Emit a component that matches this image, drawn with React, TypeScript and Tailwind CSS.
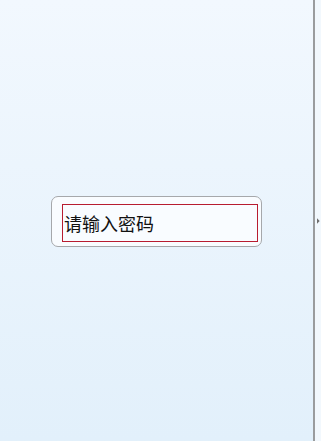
import React from "react";

export default function App() {
  return (
    <div
      className="flex w-[321px] h-[441px] overflow-hidden bg-gradient-to-b from-[#f2f8fe] to-[#e2f0fb]"
      style={{ fontFamily: '"Noto Sans CJK SC", "Liberation Sans", sans-serif' }}
    >
      <div className="flex flex-1 items-center justify-center">
        <div className="mt-[2px] w-[211px] h-[51px] rounded-[7px] border border-[#a6a8ab] bg-[#f9fcff] pl-[10px] pr-[3px] pt-[7px] pb-[4px] box-border">
          <div className="h-[38px] w-full border border-[#b81c30] flex items-center pl-[1px] box-border">
            <span className="text-[18px] leading-none text-[#111]">请输入密码</span>
          </div>
        </div>
      </div>
      <div className="w-[2px] h-full bg-[#9a9c9e]" />
      <div className="w-[6px] h-full bg-[#f2f8fd] flex items-center">
        <svg width="6" height="8" viewBox="0 0 6 8" className="ml-[2px]">
          <polygon points="0,0 4,4 0,8" fill="#6e6e6e" />
        </svg>
      </div>
    </div>
  );
}
